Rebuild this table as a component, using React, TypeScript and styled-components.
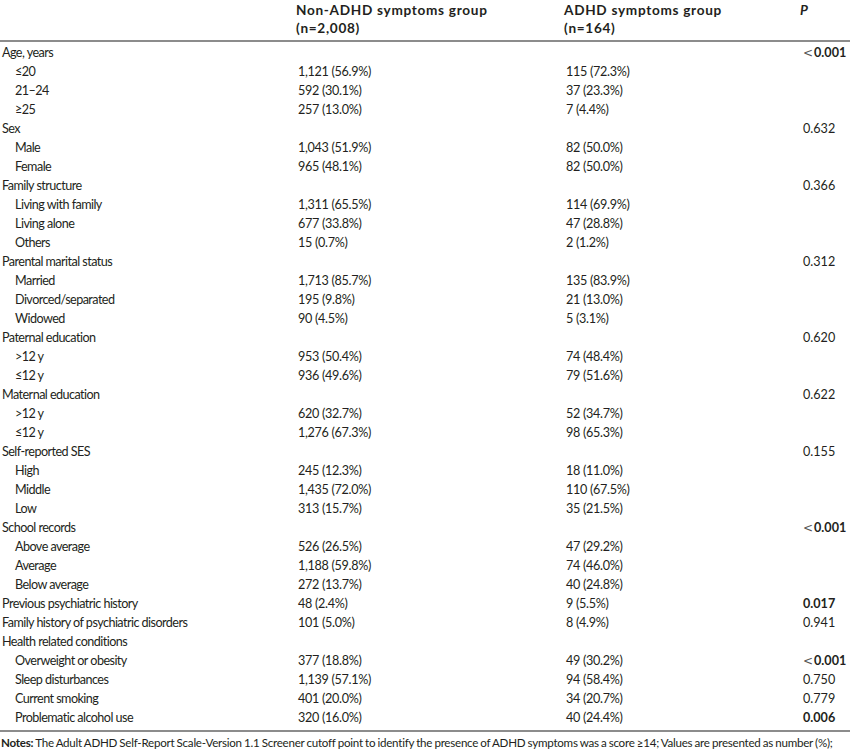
import styled, { createGlobalStyle } from "styled-components";

const GlobalStyle = createGlobalStyle`
    body {
        margin: 0;
        background: #ffffff;
        font-family: Lato, "Open Sans", Arial, sans-serif;
        color: #231f20;
    }
`;

const StyledPage = styled.div`
    width: 850px;
    height: 750px;
    overflow: hidden;
    background: #ffffff;
`;

const StyledGrid = styled.div`
    display: grid;
    grid-template-columns: 296px 268px 239px 1fr;
    grid-auto-rows: min-content;
    font-size: 12.6px;
    letter-spacing: -0.3px;
`;

const StyledRow = styled.div`
    display: contents;
`;

const StyledHeadCell = styled.div<{ italic?: boolean }>`
    font-weight: 700;
    font-size: 13.6px;
    letter-spacing: ${(props) => (props.italic ? "0" : "0.7px")};
    line-height: 18px;
    padding-top: 1px;
    height: 42px;
    margin-bottom: 1px;
    box-sizing: border-box;
    border-bottom: 2px solid #8c8c8c;
    white-space: nowrap;
    font-style: ${(props) => (props.italic ? "italic" : "normal")};
    margin-left: ${(props) => (props.italic ? "-3px" : "0")};
`;

const StyledCell = styled.div<{ indent?: boolean; label?: boolean }>`
    height: 19px;
    line-height: 19px;
    white-space: nowrap;
    letter-spacing: ${(props) => (props.label ? "-0.55px" : "-0.3px")};
    padding-left: ${(props) => (props.indent ? "15px" : "2px")};
`;

const StyledPCell = styled.div`
    height: 19px;
    line-height: 19px;
    white-space: nowrap;
    letter-spacing: 0;
`;

const StyledLess = styled.span`
    font-family: "DejaVu Sans", sans-serif;
    font-weight: 400;
    font-size: 12px;
    color: #555555;
    margin-right: 1px;
`;

const StyledSpacer = styled.div`
    grid-column: 1 / -1;
    height: 3px;
    border-bottom: 2px solid #8c8c8c;
`;

const StyledNotes = styled.p`
    margin: 0;
    font-size: 11.6px;
    line-height: 22px;
    letter-spacing: -0.25px;
    word-spacing: -0.5px;
    white-space: nowrap;
    padding-left: 1px;
`;

type Row = {
    label: string;
    indent?: boolean;
    a?: string;
    b?: string;
    p?: string;
    bold?: boolean;
    lt?: boolean;
};

const rows: Row[] = [
    { label: "Age, years", p: "0.001", bold: true, lt: true },
    { label: "≤20", indent: true, a: "1,121 (56.9%)", b: "115 (72.3%)" },
    { label: "21–24", indent: true, a: "592 (30.1%)", b: "37 (23.3%)" },
    { label: "≥25", indent: true, a: "257 (13.0%)", b: "7 (4.4%)" },
    { label: "Sex", p: "0.632" },
    { label: "Male", indent: true, a: "1,043 (51.9%)", b: "82 (50.0%)" },
    { label: "Female", indent: true, a: "965 (48.1%)", b: "82 (50.0%)" },
    { label: "Family structure", p: "0.366" },
    { label: "Living with family", indent: true, a: "1,311 (65.5%)", b: "114 (69.9%)" },
    { label: "Living alone", indent: true, a: "677 (33.8%)", b: "47 (28.8%)" },
    { label: "Others", indent: true, a: "15 (0.7%)", b: "2 (1.2%)" },
    { label: "Parental marital status", p: "0.312" },
    { label: "Married", indent: true, a: "1,713 (85.7%)", b: "135 (83.9%)" },
    { label: "Divorced/separated", indent: true, a: "195 (9.8%)", b: "21 (13.0%)" },
    { label: "Widowed", indent: true, a: "90 (4.5%)", b: "5 (3.1%)" },
    { label: "Paternal education", p: "0.620" },
    { label: ">12 y", indent: true, a: "953 (50.4%)", b: "74 (48.4%)" },
    { label: "≤12 y", indent: true, a: "936 (49.6%)", b: "79 (51.6%)" },
    { label: "Maternal education", p: "0.622" },
    { label: ">12 y", indent: true, a: "620 (32.7%)", b: "52 (34.7%)" },
    { label: "≤12 y", indent: true, a: "1,276 (67.3%)", b: "98 (65.3%)" },
    { label: "Self-reported SES", p: "0.155" },
    { label: "High", indent: true, a: "245 (12.3%)", b: "18 (11.0%)" },
    { label: "Middle", indent: true, a: "1,435 (72.0%)", b: "110 (67.5%)" },
    { label: "Low", indent: true, a: "313 (15.7%)", b: "35 (21.5%)" },
    { label: "School records", p: "0.001", bold: true, lt: true },
    { label: "Above average", indent: true, a: "526 (26.5%)", b: "47 (29.2%)" },
    { label: "Average", indent: true, a: "1,188 (59.8%)", b: "74 (46.0%)" },
    { label: "Below average", indent: true, a: "272 (13.7%)", b: "40 (24.8%)" },
    { label: "Previous psychiatric history", a: "48 (2.4%)", b: "9 (5.5%)", p: "0.017", bold: true },
    { label: "Family history of psychiatric disorders", a: "101 (5.0%)", b: "8 (4.9%)", p: "0.941" },
    { label: "Health related conditions" },
    { label: "Overweight or obesity", indent: true, a: "377 (18.8%)", b: "49 (30.2%)", p: "0.001", bold: true, lt: true },
    { label: "Sleep disturbances", indent: true, a: "1,139 (57.1%)", b: "94 (58.4%)", p: "0.750" },
    { label: "Current smoking", indent: true, a: "401 (20.0%)", b: "34 (20.7%)", p: "0.779" },
    { label: "Problematic alcohol use", indent: true, a: "320 (16.0%)", b: "40 (24.4%)", p: "0.006", bold: true },
];

export default function App() {
    return (
        <StyledPage>
            <GlobalStyle />
            <StyledGrid>
                <StyledRow>
                    <StyledHeadCell />
                    <StyledHeadCell>Non-ADHD symptoms group<br />(n=2,008)</StyledHeadCell>
                    <StyledHeadCell>ADHD symptoms group<br />(n=164)</StyledHeadCell>
                    <StyledHeadCell italic>P</StyledHeadCell>
                </StyledRow>
                {rows.map((r, i) => (
                    <StyledRow key={i}>
                        <StyledCell label indent={r.indent}>{r.label}</StyledCell>
                        <StyledCell>{r.a}</StyledCell>
                        <StyledCell>{r.b}</StyledCell>
                        <StyledPCell>
                            {r.lt ? <StyledLess>&lt;</StyledLess> : null}
                            {r.bold ? <b>{r.p}</b> : r.p}
                        </StyledPCell>
                    </StyledRow>
                ))}
                <StyledSpacer />
            </StyledGrid>
            <StyledNotes>
                <b>Notes:</b> The Adult ADHD Self-Report Scale-Version 1.1 Screener cutoff point to identify the presence of ADHD symptoms was a score ≥14; Values are presented as number (%);
            </StyledNotes>
        </StyledPage>
    );
}
